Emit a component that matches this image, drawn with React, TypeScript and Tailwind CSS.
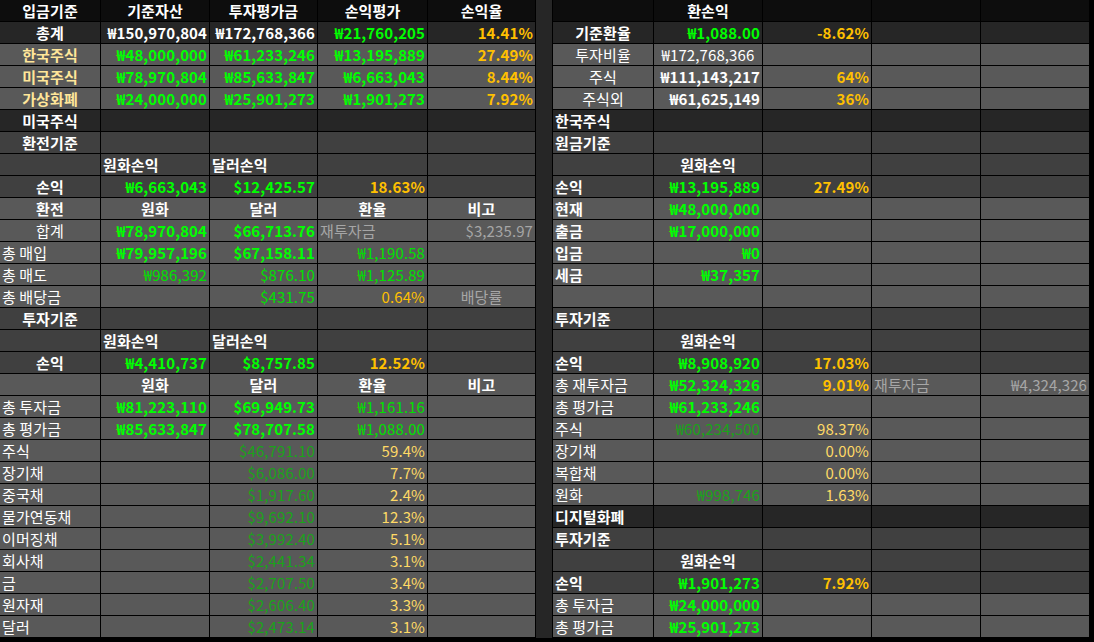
import React from "react";

type C = [string, string?, string?];
const st: Record<string, string> = {
  h: "text-white font-bold",
  w: "text-white",
  wb: "text-white font-bold",
  y: "text-[#ffe699] font-bold",
  G: "text-[#00ff00] font-bold",
  g: "text-[#00e000]",
  dg: "text-[#1aa31a]",
  O: "text-[#ffc000] font-bold",
  o: "text-[#ffc000]",
  ly: "text-[#ffd966]",
  gr: "text-[#a6a6a6]",
};
const widthsL = ["w-[101px]", "w-[109px]", "w-[108px]", "w-[110px]", "w-[108px]"];
const widthsR = ["w-[101px]", "w-[109px]", "w-[109px]", "w-[109px]", "w-[109px]"];
const bgs: Record<string, string> = { k: "bg-[#0d0d0d]", d: "bg-[#262626]", m: "bg-[#404040]", l: "bg-[#595959]" };

type R = [string, C[], string, C[]];
const E: C = [""];
const rows: R[] = [
  ["k", [["입금기준", "h", "c"], ["기준자산", "h", "c"], ["투자평가금", "h", "c"], ["손익평가", "h", "c"], ["손익율", "h", "c"]], "k", [E, ["환손익", "h", "c"], E, E, E]],
  ["d", [["총계", "h", "c"], ["₩150,970,804", "wb", "r"], ["₩172,768,366", "wb", "r"], ["₩21,760,205", "G", "r"], ["14.41%", "O", "r"]], "d", [["기준환율", "h", "c"], ["₩1,088.00", "G", "r"], ["-8.62%", "O", "r"], E, E]],
  ["l", [["한국주식", "y", "c"], ["₩48,000,000", "G", "r"], ["₩61,233,246", "G", "r"], ["₩13,195,889", "G", "r"], ["27.49%", "O", "r"]], "l", [["투자비율", "w", "c"], ["₩172,768,366", "w", "c"], E, E, E]],
  ["l", [["미국주식", "y", "c"], ["₩78,970,804", "G", "r"], ["₩85,633,847", "G", "r"], ["₩6,663,043", "G", "r"], ["8.44%", "O", "r"]], "l", [["주식", "w", "c"], ["₩111,143,217", "wb", "r"], ["64%", "O", "r"], E, E]],
  ["l", [["가상화폐", "y", "c"], ["₩24,000,000", "G", "r"], ["₩25,901,273", "G", "r"], ["₩1,901,273", "G", "r"], ["7.92%", "O", "r"]], "l", [["주식외", "w", "c"], ["₩61,625,149", "wb", "r"], ["36%", "O", "r"], E, E]],
  ["d", [["미국주식", "h", "c"], E, E, E, E], "d", [["한국주식", "h"], E, E, E, E]],
  ["m", [["환전기준", "h", "c"], E, E, E, E], "m", [["원금기준", "h"], E, E, E, E]],
  ["m", [E, ["원화손익", "h"], ["달러손익", "h"], E, E], "m", [E, ["원화손익", "h", "c"], E, E, E]],
  ["m", [["손익", "h", "c"], ["₩6,663,043", "G", "r"], ["$12,425.57", "G", "r"], ["18.63%", "O", "r"], E], "m", [["손익", "h"], ["₩13,195,889", "G", "r"], ["27.49%", "O", "r"], E, E]],
  ["l", [["환전", "h", "c"], ["원화", "h", "c"], ["달러", "h", "c"], ["환율", "h", "c"], ["비고", "h", "c"]], "l", [["현재", "h"], ["₩48,000,000", "G", "r"], E, E, E]],
  ["l", [["합계", "w", "c"], ["₩78,970,804", "G", "r"], ["$66,713.76", "G", "r"], ["재투자금", "gr"], ["$3,235.97", "gr", "r"]], "l", [["출금", "h"], ["₩17,000,000", "G", "r"], E, E, E]],
  ["l", [["총 매입", "w"], ["₩79,957,196", "G", "r"], ["$67,158.11", "G", "r"], ["₩1,190.58", "g", "r"], E], "l", [["입금", "h"], ["₩0", "G", "r"], E, E, E]],
  ["l", [["총 매도", "w"], ["₩986,392", "g", "r"], ["$876.10", "g", "r"], ["₩1,125.89", "g", "r"], E], "l", [["세금", "h"], ["₩37,357", "G", "r"], E, E, E]],
  ["l", [["총 배당금", "w"], E, ["$431.75", "g", "r"], ["0.64%", "o", "r"], ["배당률", "gr", "c"]], "l", [E, E, E, E, E]],
  ["m", [["투자기준", "h", "c"], E, E, E, E], "m", [["투자기준", "h"], E, E, E, E]],
  ["m", [E, ["원화손익", "h"], ["달러손익", "h"], E, E], "m", [E, ["원화손익", "h", "c"], E, E, E]],
  ["m", [["손익", "h", "c"], ["₩4,410,737", "G", "r"], ["$8,757.85", "G", "r"], ["12.52%", "O", "r"], E], "m", [["손익", "h"], ["₩8,908,920", "G", "r"], ["17.03%", "O", "r"], E, E]],
  ["l", [E, ["원화", "h", "c"], ["달러", "h", "c"], ["환율", "h", "c"], ["비고", "h", "c"]], "l", [["총 재투자금", "w"], ["₩52,324,326", "G", "r"], ["9.01%", "O", "r"], ["재투자금", "gr"], ["₩4,324,326", "gr", "r"]]],
  ["l", [["총 투자금", "w"], ["₩81,223,110", "G", "r"], ["$69,949.73", "G", "r"], ["₩1,161.16", "g", "r"], E], "l", [["총 평가금", "w"], ["₩61,233,246", "G", "r"], E, E, E]],
  ["l", [["총 평가금", "w"], ["₩85,633,847", "G", "r"], ["$78,707.58", "G", "r"], ["₩1,088.00", "g", "r"], E], "l", [["주식", "w"], ["₩60,234,500", "dg", "r"], ["98.37%", "ly", "r"], E, E]],
  ["l", [["주식", "w"], E, ["$46,791.10", "dg", "r"], ["59.4%", "ly", "r"], E], "l", [["장기채", "w"], E, ["0.00%", "ly", "r"], E, E]],
  ["l", [["장기채", "w"], E, ["$6,086.00", "dg", "r"], ["7.7%", "ly", "r"], E], "l", [["복합채", "w"], E, ["0.00%", "ly", "r"], E, E]],
  ["l", [["중국채", "w"], E, ["$1,917.60", "dg", "r"], ["2.4%", "ly", "r"], E], "l", [["원화", "w"], ["₩998,746", "dg", "r"], ["1.63%", "ly", "r"], E, E]],
  ["l", [["물가연동채", "w"], E, ["$9,692.10", "dg", "r"], ["12.3%", "ly", "r"], E], "d", [["디지털화폐", "h"], E, E, E, E]],
  ["l", [["이머징채", "w"], E, ["$3,992.40", "dg", "r"], ["5.1%", "ly", "r"], E], "m", [["투자기준", "h"], E, E, E, E]],
  ["l", [["회사채", "w"], E, ["$2,441.34", "dg", "r"], ["3.1%", "ly", "r"], E], "m", [E, ["원화손익", "h", "c"], E, E, E]],
  ["l", [["금", "w"], E, ["$2,707.50", "dg", "r"], ["3.4%", "ly", "r"], E], "m", [["손익", "h"], ["₩1,901,273", "G", "r"], ["7.92%", "O", "r"], E, E]],
  ["l", [["원자재", "w"], E, ["$2,606.40", "dg", "r"], ["3.3%", "ly", "r"], E], "l", [["총 투자금", "w"], ["₩24,000,000", "G", "r"], E, E, E]],
  ["l", [["달러", "w"], E, ["$2,473.14", "dg", "r"], ["3.1%", "ly", "r"], E], "l", [["총 평가금", "w"], ["₩25,901,273", "G", "r"], E, E, E]],
];

function Cell({ c, w }: { c: C; w: string }) {
  const al = c[2] === "c" ? "justify-center" : c[2] === "r" ? "justify-end" : "justify-start";
  return (
    <div className={`${w} h-full shrink-0 flex items-center ${al} px-[2px] border-r border-b border-black overflow-visible whitespace-nowrap ${st[c[1] || "w"]}`}>
      {c[0]}
    </div>
  );
}

export default function App() {
  return (
    <div className="w-[1094px] h-[642px] bg-black overflow-hidden text-[15px] leading-none tracking-[0.1px]" style={{ fontFamily: '"Noto Sans CJK KR", "Noto Sans", sans-serif' }}>
      {rows.map((r, i) => (
        <div key={i} className="flex h-[22px]">
          <div className={`flex ${bgs[r[0]]}`}>
            {r[1].map((c, j) => <Cell key={j} c={c} w={widthsL[j]} />)}
          </div>
          <div className="w-[17px] shrink-0 bg-[#262626] border-r border-black" />
          <div className={`flex ${bgs[r[2]]}`}>
            {r[3].map((c, j) => <Cell key={j} c={c} w={widthsR[j]} />)}
          </div>
        </div>
      ))}
    </div>
  );
}
